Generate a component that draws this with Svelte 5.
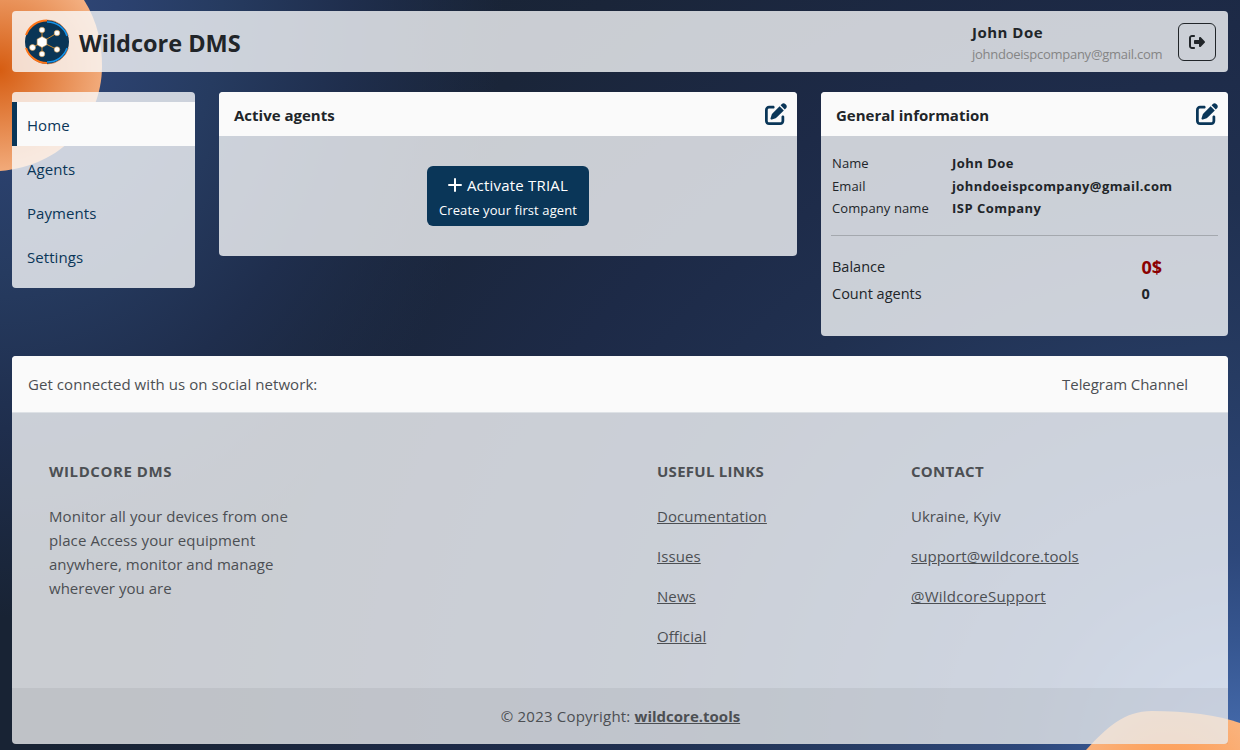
<script>
  const menu = ['Home', 'Agents', 'Payments', 'Settings'];
  const links = ['Documentation', 'Issues', 'News', 'Official'];
</script>

{#snippet editIcon()}
  <svg class="edit" viewBox="0 0 512 512" aria-hidden="true">
    <path d="M471.6 21.7c-21.9-21.9-57.3-21.9-79.2 0L362.3 51.7l97.9 97.9 30.1-30.1c21.9-21.9 21.9-57.3 0-79.2L471.6 21.7zm-299.2 220c-6.1 6.1-10.8 13.6-13.5 21.9l-29.6 88.8c-2.9 8.6-.6 18.1 5.8 24.6s15.9 8.7 24.6 5.8l88.8-29.6c8.2-2.7 15.7-7.4 21.9-13.5L437.7 172.3 339.7 74.3 172.4 241.7zM96 64C43 64 0 107 0 160V416c0 53 43 96 96 96H352c53 0 96-43 96-96V320c0-17.700-14.300-32-32-32s-32 14.300-32 32v96c0 17.700-14.300 32-32 32H96c-17.700 0-32-14.300-32-32V160c0-17.700 14.300-32 32-32h96c17.700 0 32-14.300 32-32s-14.300-32-32-32H96z" />
  </svg>
{/snippet}

<div class="page">
  <svg class="backdrop" width="1240" height="750" viewBox="0 0 1240 750" aria-hidden="true">
    <defs>
      <radialGradient id="glow" gradientUnits="userSpaceOnUse" cx="0" cy="70" r="110">
        <stop offset="0" stop-color="#d65d12" />
        <stop offset="1" stop-color="#f4b183" />
      </radialGradient>
      <radialGradient id="corner" gradientUnits="userSpaceOnUse" cx="1170" cy="790" r="110">
        <stop offset="0" stop-color="#ff9648" />
        <stop offset="1" stop-color="#f9b785" />
      </radialGradient>
    </defs>
    <path d="M0 0H84C98 22 102 45 102 66C102 120 62 166 0 171Z" fill="url(#glow)" />
    <path d="M1086 750C1106 728 1124 711 1152 711C1186 711 1218 715 1240 723V750Z" fill="url(#corner)" />
  </svg>

  <header class="panel top">
    <svg class="logo" viewBox="0 0 46 46" aria-hidden="true">
      <circle cx="23" cy="23" r="22" fill="#0a3556" />
      <path d="M2 16A22 22 0 0 1 23 1.500" fill="none" stroke="#ff7417" stroke-width="2" />
      <path d="M2 29A22 22 0 0 0 23 44" fill="none" stroke="#ff7417" stroke-width="2" />
      <path d="M23 1A22 22 0 0 1 44.500 17M44.500 29A22 22 0 0 1 23 45" fill="none" stroke="#c4703c" stroke-width=".6" />
      <path d="M23 3A20.500 20.500 0 0 1 43 17M43 29A20.500 20.500 0 0 1 23 43" fill="none" stroke="#1593ea" stroke-width="1.600" />
      <path d="M18 23V11M18 23L33 14M18 23L33 30.500M18 23V35M18 23L8.500 28.500" stroke="#c9862b" stroke-width="1" />
      <g fill="#fff" stroke="#d79a4e" stroke-width=".6">
        <path d="M18 17.500L22.900 20.200V25.800L18 28.500L13.100 25.800V20.200Z" />
        <circle cx="18" cy="11" r="2.800" /><circle cx="33" cy="14" r="2.800" />
        <circle cx="33" cy="30.500" r="2.800" /><circle cx="18" cy="35" r="2.800" />
        <circle cx="8.500" cy="28.500" r="3" />
      </g>
    </svg>
    <h1>Wildcore DMS</h1>
    <div class="user">
      <b>John Doe</b>
      <small>johndoeispcompany@gmail.com</small>
    </div>
    <button class="exit" aria-label="Log out">
      <svg viewBox="0 0 512 512" width="16" height="16">
        <path d="M377.900 105.900L500.700 228.700c7.200 7.200 11.300 17.100 11.300 27.300s-4.100 20.100-11.300 27.300L377.900 406.100c-6.400 6.400-15 9.900-24 9.900c-18.700 0-33.900-15.200-33.900-33.900l0-62.100-128 0c-17.700 0-32-14.300-32-32l0-64c0-17.700 14.300-32 32-32l128 0 0-62.100c0-18.700 15.200-33.900 33.900-33.900c9 0 17.600 3.600 24 9.900zM160 96L96 96c-17.700 0-32 14.300-32 32l0 256c0 17.700 14.300 32 32 32l64 0c17.700 0 32 14.300 32 32s-14.300 32-32 32l-64 0c-53 0-96-43-96-96L0 128C0 75 43 32 96 32l64 0c17.700 0 32 14.300 32 32s-14.300 32-32 32z" fill="#212529" />
      </svg>
    </button>
  </header>

  <main>
    <nav class="panel">
      {#each menu as item, i}
        <a href="#top" class:active={i === 0}>{item}</a>
      {/each}
    </nav>

    <section class="panel agents">
      <div class="head"><h2>Active agents</h2>{@render editIcon()}</div>
      <div class="agents-body">
        <button class="trial">
          <span class="line">
            <svg width="14" height="14" viewBox="0 0 14 14"><path d="M7 1V13M1 7H13" stroke="#fff" stroke-width="2" stroke-linecap="round" /></svg>
            <span class="t1">Activate TRIAL</span>
          </span>
          <span class="t2">Create your first agent</span>
        </button>
      </div>
    </section>

    <section class="panel info">
      <div class="head"><h2>General information</h2>{@render editIcon()}</div>
      <dl class="who">
        <dt>Name</dt><dd>John Doe</dd>
        <dt>Email</dt><dd class="mail">johndoeispcompany@gmail.com</dd>
        <dt>Company name</dt><dd>ISP Company</dd>
      </dl>
      <hr />
      <dl class="sums">
        <dt>Balance</dt><dd class="money">0$</dd>
        <dt>Count agents</dt><dd>0</dd>
      </dl>
    </section>
  </main>

  <footer class="panel">
    <div class="social"><span class="get">Get connected with us on social network:</span><span class="tg">Telegram Channel</span></div>
    <div class="cols">
      <div class="about">
        <h3>WILDCORE DMS</h3>
        <p>Monitor all your devices from one<br />place Access your equipment<br /><span class="tight">anywhere, monitor and manage<br />wherever you are</span></p>
      </div>
      <div class="useful">
        <h3>USEFUL LINKS</h3>
        {#each links as l}<p><a href="#top">{l}</a></p>{/each}
      </div>
      <div class="contact">
        <h3>CONTACT</h3>
        <p class="place">Ukraine, Kyiv</p>
        <p><a href="#top">support@wildcore.tools</a></p>
        <p class="handle"><a href="#top">@WildcoreSupport</a></p>
      </div>
    </div>
    <div class="copy"><span>© 2023 Copyright:&nbsp;</span><a href="#top">wildcore.tools</a></div>
  </footer>
</div>

<style>
  :global(body) { margin: 0; overflow: hidden; }
  * { box-sizing: border-box; }
  .page {
    position: relative;
    height: 750px;
    padding: 11px 12px 6px;
    overflow: hidden;
    font: 15px/24px 'Open Sans', 'Noto Sans', sans-serif;
    color: #212529;
    background:
      radial-gradient(ellipse 530px 650px at 0 0, #324b7a 0%, #2c4270 22%, #263b60 42%, #1f2e4d 66%, rgba(26, 36, 56, 0) 95%),
      radial-gradient(ellipse 1200px 1100px at 1240px 750px, #466cae 0%, #365690 10%, #2d477a 18%, #263b62 34%, #203050 50%, #1d2a47 66%, #1a2539 86%, #182334 100%);
  }
  .backdrop { position: absolute; left: 0; top: 0; }
  .panel { position: relative; background: rgba(250, 251, 252, .79); border-radius: 4px; }
  h1, h2, h3, p, dl, dd { margin: 0; }
  button { font: inherit; padding: 0; }
  .top { height: 61px; display: flex; align-items: center; padding: 0 12px; }
  .logo { width: 46px; height: 46px; margin: 0 9px 0 0; }
  h1 { font-size: 23.500px; line-height: 30px; padding-top: 2px; flex: 1; }
  .user { display: flex; flex-direction: column; width: 206px; padding-top: 2px; }
  .user b { line-height: 22px; letter-spacing: .5px; }
  .user small { font-size: 13px; line-height: 22px; color: #858585; letter-spacing: -.26px; }
  .exit { width: 38px; height: 38px; background: none; border: 1px solid #212529; border-radius: 6px; display: grid; place-items: center; }
  main { display: grid; grid-template-columns: 183px 578px 407px; gap: 24px; align-items: start; height: 264px; margin-top: 20px; }
  nav { height: 196px; padding-top: 10px; }
  nav a { display: block; height: 44px; padding: 11px 15px 0; line-height: 24px; color: #0a3658; text-decoration: none; letter-spacing: .06px; }
  nav a.active { background: #fafafa; border-left: 5px solid #0a3658; padding-left: 10px; }
  .head { height: 44px; background: #fafafa; border-radius: 4px 4px 0 0; display: flex; justify-content: space-between; align-items: center; padding: 0 10px 0 15px; }
  h2 { font-size: 15px; line-height: 24px; padding-top: 2px; }
  .edit { width: 22px; height: 22px; fill: #0a3658; }
  .agents { height: 164px; }
  .agents-body { display: flex; justify-content: center; padding-top: 30px; }
  .trial { width: 162px; height: 60px; border: 0; border-radius: 6px; background: #0a3658; color: #fff; display: flex; flex-direction: column; align-items: center; padding-top: 6px; }
  .line { display: flex; align-items: center; gap: 5px; height: 25px; }
  .t1 { letter-spacing: .2px; }
  .t2 { font-size: 13px; line-height: 24px; padding-top: 1px; letter-spacing: .1px; }
  .info { height: 244px; }
  .who { display: grid; grid-template-columns: 120px 1fr; padding: 16px 11px 0; font-size: 13px; line-height: 22.700px; }
  .who dt { letter-spacing: .1px; }
  .who dd { letter-spacing: .48px; }
  .who .mail { letter-spacing: .39px; }
  dd { font-weight: 700; }
  hr { margin: 15px 10px 0; border: 0; height: 1px; background: #a4a8ae; }
  .sums { display: grid; grid-template-columns: 309.500px 1fr; padding: 17px 11px 0; font-size: 14.500px; line-height: 27px; }
  .money { color: #8b0000; font-size: 18px; padding-top: 1px; line-height: 26px; }
  footer { height: 388px; color: #4c4f53; }
  .social { height: 57px; background: #fafafa; border-bottom: 1px solid #dee2e6; border-radius: 4px 4px 0 0; display: flex; justify-content: space-between; align-items: center; padding: 0 40px 0 16px; }
  .get { letter-spacing: .07px; }
  .tg { letter-spacing: -.06px; }
  .cols { display: grid; grid-template-columns: 608px 254px 1fr; padding: 46px 0 0 37px; height: 275px; }
  h3 { font-size: 15px; line-height: 24px; margin-bottom: 21px; letter-spacing: .27px; }
  .about h3 { letter-spacing: .57px; }
  .about p { letter-spacing: .1px; }
  .about .tight { letter-spacing: .02px; }
  .cols p { margin-bottom: 16px; }
  .useful p, .contact p { letter-spacing: .08px; }
  .contact .place { letter-spacing: -.06px; }
  .contact .handle { letter-spacing: .24px; }
  a { color: inherit; }
  .copy { height: 56px; background: rgba(0, 0, 0, .05); display: flex; justify-content: center; align-items: center; padding-left: 1px; }
  .copy span { letter-spacing: .2px; }
  .copy a { font-weight: 700; }
</style>
